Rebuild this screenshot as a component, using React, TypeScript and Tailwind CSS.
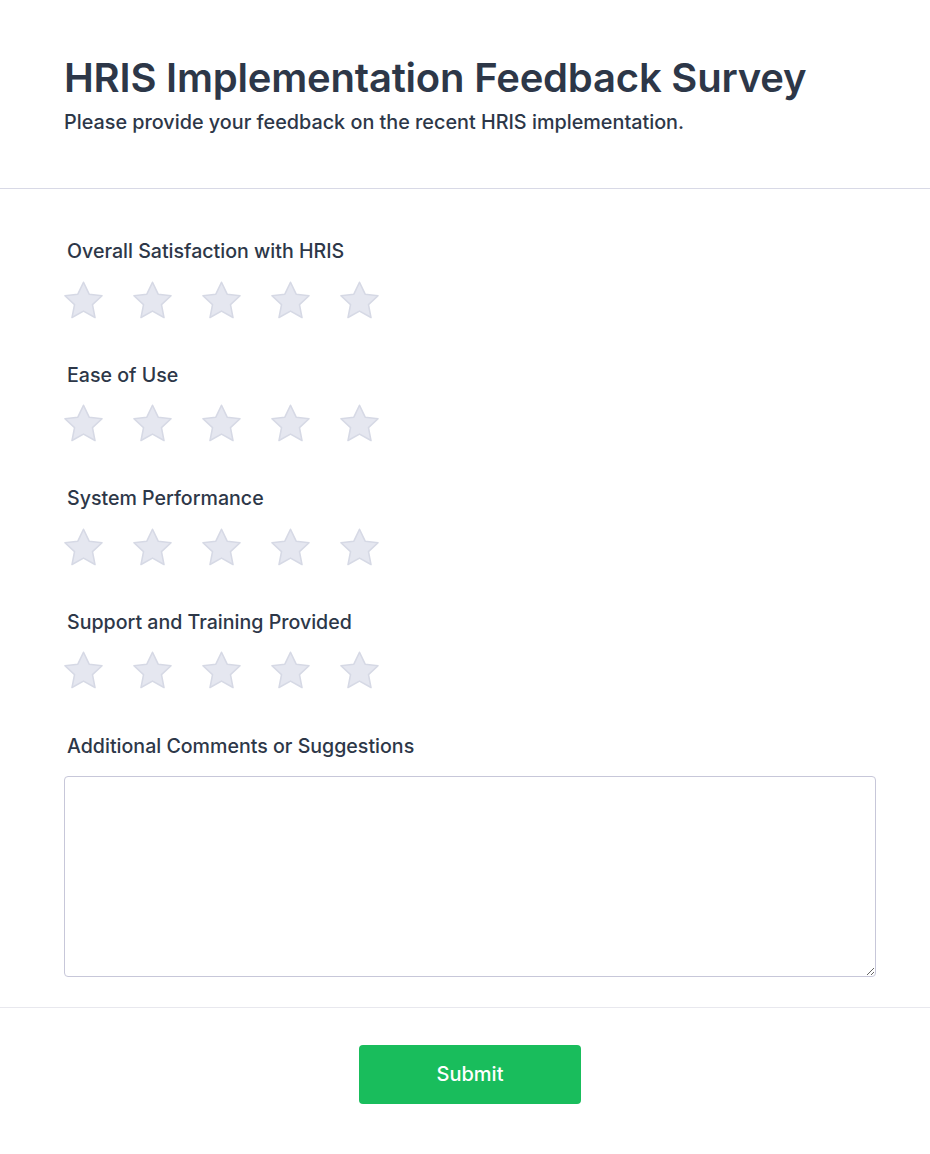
import { useState } from 'react';

const questions = [
  'Overall Satisfaction with HRIS',
  'Ease of Use',
  'System Performance',
  'Support and Training Provided',
];

function Star({ active }: { active: boolean }) {
  return (
    <svg viewBox="2 2 20 19.4" className="h-[38px] w-[39px]">
      <path
        d="M12 2.6l2.9 6.1 6.6.8-4.9 4.6 1.3 6.6L12 17.4l-5.9 3.3 1.3-6.6-4.9-4.6 6.6-.8z"
        fill={active ? '#facc15' : '#e5e7f0'}
        stroke={active ? '#eab308' : '#d6d9e5'}
        strokeWidth="0.8"
        strokeLinejoin="round"
      />
    </svg>
  );
}

function StarRating({ label }: { label: string }) {
  const [value, setValue] = useState(0);
  return (
    <div>
      <p className="pl-[3px] text-[19.6px] font-medium leading-7">{label}</p>
      <div className="mt-[15.5px] flex gap-[30px]">
        {[1, 2, 3, 4, 5].map((n) => (
          <button key={n} type="button" onClick={() => setValue(n)} className="cursor-pointer">
            <Star active={n <= value} />
          </button>
        ))}
      </div>
    </div>
  );
}

export default function App() {
  return (
    <div className="min-h-screen bg-white font-['Inter',sans-serif] text-[#2d3748]">
      <header className="border-b border-[#d8d9e6] pb-[52px] pl-16 pr-[54px] pt-[54px]">
        <h1 className="text-[40px] font-semibold leading-[48px] tracking-[-0.2px]">HRIS Implementation Feedback Survey</h1>
        <p className="mt-[6px] text-[19.8px] font-medium leading-7">Please provide your feedback on the recent HRIS implementation.</p>
      </header>

      <form className="pl-16 pr-[54px] pt-[48px]" onSubmit={(e) => e.preventDefault()}>
        <div className="flex flex-col gap-[42px]">
          {questions.map((q) => (
            <StarRating key={q} label={q} />
          ))}
        </div>
        <div className="mt-[42.5px]">
          <label className="block pl-[3px] text-[19.6px] font-medium leading-7">Additional Comments or Suggestions</label>
          <textarea className="mt-[16px] block h-[201px] w-full rounded border border-[#c7c7d9] p-3 text-base outline-none" />
        </div>
      </form>

      <div className="mt-[30px] flex justify-center border-t border-[#e8e8ee] pl-16 pr-[54px] pt-[37px]">
        <button
          type="button"
          className="h-[59px] w-[222px] rounded bg-[#19bd5c] text-xl font-medium text-white"
        >
          Submit
        </button>
      </div>
    </div>
  );
}
